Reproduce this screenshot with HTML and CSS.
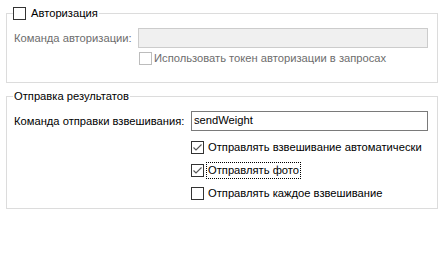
FILE: index.html
```html
<!DOCTYPE html>
<html lang="ru">
<head>
    <meta charset="UTF-8">
    <title>Настройки отправки</title>
    <link rel="stylesheet" href="styles.css">
</head>
<body>
    <div class="settings">
        <fieldset class="group group-auth">
            <legend class="group-title">
                <span class="check"></span>
                <span>Авторизация</span>
            </legend>
            <div class="field-row auth-row">
                <span class="field-label disabled">Команда авторизации:</span>
                <div class="textbox textbox-disabled"></div>
            </div>
            <div class="check-row auth-check">
                <span class="check check-disabled"></span>
                <span class="disabled">Использовать токен авторизации в запросах</span>
            </div>
        </fieldset>

        <fieldset class="group group-send">
            <legend class="group-title">Отправка результатов</legend>
            <div class="send-grid">
                <span class="field-label">Команда отправки взвешивания:</span>
                <div class="textbox">sendWeight</div>

                <div class="check-row send-check">
                    <span class="check">
                        <svg viewBox="0 0 11 11" width="11" height="11"><path d="M1.5 5.5 L4 8 L9.5 2.5" fill="none" stroke="#555" stroke-width="1.1"/></svg>
                    </span>
                    <span class="check-text">Отправлять взвешивание автоматически</span>
                </div>
                <div class="check-row send-check">
                    <span class="check">
                        <svg viewBox="0 0 11 11" width="11" height="11"><path d="M1.5 5.5 L4 8 L9.5 2.5" fill="none" stroke="#555" stroke-width="1.1"/></svg>
                    </span>
                    <span class="check-text focused">Отправлять фото</span>
                </div>
                <div class="check-row send-check">
                    <span class="check"></span>
                    <span class="check-text">Отправлять каждое взвешивание</span>
                </div>
            </div>
        </fieldset>
    </div>
</body>
</html>
```

FILE: styles.css
```css
* {
    margin: 0;
    padding: 0;
    box-sizing: border-box;
}

body {
    background-color: #fff;
    color: #000;
    font-family: 'Liberation Sans', Arial, sans-serif;
    font-size: 11.2px;
    line-height: 13px;
    white-space: nowrap;
}

.settings {
    display: flex;
    flex-direction: column;
    gap: 7px;
    width: 432px;
    margin-left: 6px;
    padding-top: 7px;
}

.group {
    border: 1px solid #dcdcdc;
    min-width: 0;
}

.group-title {
    display: flex;
    align-items: center;
    gap: 5px;
    margin-left: -1px;
    padding: 0 1px 0 0;
}

.group-auth {
    height: 76px;
    padding: 8px 9px 0 7px;
}

.group-send {
    height: 119px;
    padding: 8px 9px 0 7px;
}

.group-send .group-title {
    padding: 0 1px 0 1px;
}

.disabled {
    color: #6d6d6d;
}

.field-row {
    display: flex;
    align-items: center;
}

.auth-row .field-label {
    width: 124px;
}

.textbox {
    height: 20px;
    border: 1px solid #7a7a7a;
    background-color: #fff;
    padding: 2px 2px;
    flex: 1;
}

.textbox-disabled {
    border-color: #cccccc;
    background-color: #f0f0f0;
}

.check-row {
    display: flex;
    align-items: center;
    gap: 2px;
}

.check {
    width: 13px;
    height: 13px;
    border: 1px solid #333;
    background-color: #fff;
    display: inline-flex;
    align-items: center;
    justify-content: center;
    flex: none;
}

.check-disabled {
    border-color: #bcbcbc;
}

.auth-check {
    margin: 4px 0 0 125px;
}

.send-grid {
    display: grid;
    grid-template-columns: 177px 237px;
    row-gap: 10px;
    align-items: center;
}

.send-check {
    grid-column: 2;
    height: 13px;
}

.check-text {
    padding: 1px 1px;
    border: 1px solid transparent;
}

.check-text.focused {
    border: 1px dotted #000;
}
```
